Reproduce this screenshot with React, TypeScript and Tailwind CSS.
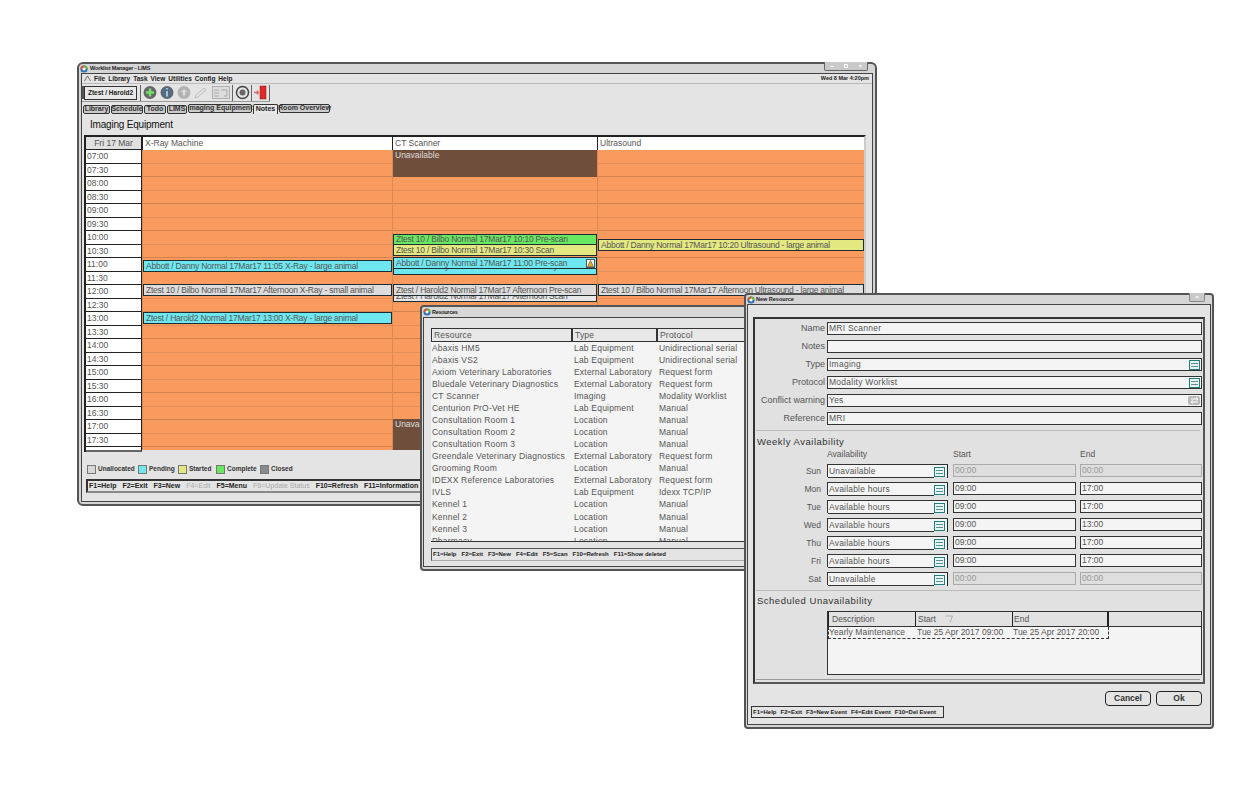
import type { ReactNode } from "react"

const times = ["07:00","07:30","08:00","08:30","09:00","09:30","10:00","10:30","11:00","11:30","12:00","12:30","13:00","13:30","14:00","14:30","15:00","15:30","16:00","16:30","17:00","17:30"]

const resources = [
  ["Abaxis HM5", "Lab Equipment", "Unidirectional serial"],
  ["Abaxis VS2", "Lab Equipment", "Unidirectional serial"],
  ["Axiom Veterinary Laboratories", "External Laboratory", "Request form"],
  ["Bluedale Veterinary Diagnostics", "External Laboratory", "Request form"],
  ["CT Scanner", "Imaging", "Modality Worklist"],
  ["Centurion PrO-Vet HE", "Lab Equipment", "Manual"],
  ["Consultation Room 1", "Location", "Manual"],
  ["Consultation Room 2", "Location", "Manual"],
  ["Consultation Room 3", "Location", "Manual"],
  ["Greendale Veterinary Diagnostics", "External Laboratory", "Request form"],
  ["Grooming Room", "Location", "Manual"],
  ["IDEXX Reference Laboratories", "External Laboratory", "Request form"],
  ["IVLS", "Lab Equipment", "Idexx TCP/IP"],
  ["Kennel 1", "Location", "Manual"],
  ["Kennel 2", "Location", "Manual"],
  ["Kennel 3", "Location", "Manual"],
  ["Pharmacy", "Location", "Manual"],
]

const week = [
  ["Sun", "Unavailable", "00:00", "00:00"],
  ["Mon", "Available hours", "09:00", "17:00"],
  ["Tue", "Available hours", "09:00", "17:00"],
  ["Wed", "Available hours", "09:00", "13:00"],
  ["Thu", "Available hours", "09:00", "17:00"],
  ["Fri", "Available hours", "09:00", "17:00"],
  ["Sat", "Unavailable", "00:00", "00:00"],
]

function AppLogo() {
  return (
    <svg width="8" height="8" viewBox="0 0 8 8" className="shrink-0">
      <circle cx="4" cy="4" r="3.6" fill="#2f6fb5" />
      <path d="M4 .5A3.5 3.5 0 0 1 7.5 4H4z" fill="#6cb33f" />
      <path d="M.5 4A3.5 3.5 0 0 1 4 .5V4z" fill="#d9503f" />
      <circle cx="4" cy="4" r="1.6" fill="#fff" />
    </svg>
  )
}

function ListIcon() {
  return (
    <span className="flex h-[10px] w-[11px] flex-col justify-center gap-[2px] border border-[#1f7f80] bg-[#e8f4f4] px-[1px]">
      <span className="h-px bg-[#5b8f90]" />
      <span className="h-px bg-[#5b8f90]" />
    </span>
  )
}

function ToggleIcon() {
  return (
    <span className="flex h-[9px] w-[12px] items-center justify-center rounded-[2px] bg-[#b9b9b9]">
      <svg width="9" height="7" viewBox="0 0 9 7" fill="none" stroke="#fff" strokeWidth="1">
        <path d="M1 2h7M6 .5 8 2 6 3.5M8 5H1M3 3.5 1 5l2 1.5" />
      </svg>
    </span>
  )
}

function Event(props: { top: number; h: number; color: string; label: string; z?: number; children?: ReactNode }) {
  return (
    <div
      className="absolute left-0 right-0 flex items-center justify-between overflow-hidden whitespace-nowrap border-[1px] border-[#1d2b33] pl-[2px] text-[8.5px] leading-none text-[#555] tracking-[-0.23px]"
      style={{ top: props.top, height: props.h, background: props.color, zIndex: props.z ?? 1 }}
    >
      <span>{props.label}</span>
      {props.children}
    </div>
  )
}

function Column(props: { width: number; title: string; children?: ReactNode }) {
  return (
    <div className="flex shrink-0 flex-col" style={{ width: props.width }}>
      <div className="flex h-[13px] items-center border-l border-[#222] bg-white pl-[2px] text-[8.5px] text-[#555]">{props.title}</div>
      <div className="relative h-[300px] overflow-hidden border-l border-[#d98a55] bg-[#f99b5e]">
        {times.map((t, i) => (
          <div key={t} className={"h-[13.5px] border-b " + (i % 2 ? "border-[#d4824c]" : "border-[#e58f58]")} />
        ))}
        {props.children}
      </div>
    </div>
  )
}

function Tab(props: { width: number; label: string; active?: boolean; raised?: boolean }) {
  if (props.active) {
    return <div className="flex h-[10px] items-center justify-center whitespace-nowrap rounded-t-[2px] border border-b-0 border-[#333] bg-[#e8e8e8] text-[7px] font-bold text-[#222]" style={{ width: props.width }}>{props.label}</div>
  }
  return (
    <div
      className={"flex h-[9px] items-center justify-center whitespace-nowrap rounded-[2px] border border-[#333] bg-[#cbcbcb] text-[7px] font-bold text-[#333] " + (props.raised ? "mb-[1.5px]" : "")}
      style={{ width: props.width }}
    >
      {props.label}
    </div>
  )
}

function Swatch(props: { color: string; label: string; width: number }) {
  return (
    <div className="flex items-center gap-[2px]" style={{ width: props.width }}>
      <span className="h-[9px] w-[9px] border border-[#777]" style={{ background: props.color }} />
      <span className="whitespace-nowrap text-[6.5px] font-bold text-[#333]">{props.label}</span>
    </div>
  )
}

function Field(props: { label: string; value: string; icon?: ReactNode }) {
  return (
    <div className="flex h-[18px] items-start">
      <span className="w-[71px] whitespace-nowrap pr-[2px] pt-[1px] text-right text-[9px] leading-[11px] text-[#555]">{props.label}</span>
      <div className="relative flex h-[13px] w-[375px] items-center border border-[#333] bg-[#f4f4f4] pl-[1px] text-[8.5px] tracking-[0.25px] text-[#555]">
        {props.value}
        {props.icon && <span className="absolute right-[1px] top-[1px]">{props.icon}</span>}
      </div>
    </div>
  )
}

function TimeBox(props: { value: string; off: boolean; width: number }) {
  return (
    <div
      className={"flex h-[13px] items-center border pl-[1px] text-[8.5px] " + (props.off ? "border-[#aaa] bg-[#dedede] text-[#999]" : "border-[#333] bg-[#f4f4f4] text-[#555]")}
      style={{ width: props.width }}
    >
      {props.value}
    </div>
  )
}

function MainWindow() {
  return (
    <div className="absolute left-[77px] top-[62px] flex h-[444px] w-[800px] flex-col rounded-[6px] border-2 border-[#555] bg-[#d5d5d5] font-['Liberation_Sans',sans-serif]">
      <div className="relative flex h-[9px] shrink-0 items-center gap-[2px] pl-[1px]">
        <AppLogo />
        <span className="text-[5.5px] font-bold tracking-[-0.15px] text-[#222]">Worklist Manager - LIMS</span>
        <div className="absolute right-[7px] top-[-2px] flex h-[9px] w-[44px] items-center justify-around rounded-b-[2px] border border-t-0 border-[#666] bg-[#c9c9c9] text-white">
          <span className="h-px w-[4px] bg-white" />
          <span className="h-[4px] w-[4px] border border-white" />
          <span className="text-[6px] font-bold leading-none">×</span>
        </div>
      </div>
      <div className="mx-[2px] mb-[2px] flex min-h-0 flex-1 flex-col border border-[#444] bg-[#e4e4e4]">
        <div className="flex h-[10px] shrink-0 items-center justify-between border-b border-[#bbb] pl-[2px] pr-[3px] text-[6.5px] font-bold text-[#222]">
          <div className="flex items-center gap-[3px]">
            <svg width="7" height="7" viewBox="0 0 8 7" fill="none" stroke="#666" strokeWidth="1"><path d="M.5 6.500 4 .5l3.500 6" /></svg>
            <span>File</span><span>Library</span><span>Task</span><span>View</span><span>Utilities</span><span>Config</span><span>Help</span>
          </div>
          <span className="text-[5.5px]">Wed 8 Mar 4:20pm</span>
        </div>
        <div className="flex h-[18px] w-[188px] shrink-0 items-center border-b border-[#999]">
          <span className="h-[13px] w-[2px] border-x border-[#555]" />
          <div className="flex h-[14px] w-[53px] items-center justify-center border border-[#333] bg-[#e8e8e8] text-[6.5px] font-bold text-[#222]">Ztest / Harold2</div>
          <span className="ml-[3px] h-[16px] w-px bg-[#666]" />
          <svg width="91" height="15" viewBox="0 0 91 15" className="shrink-0">
            <circle cx="9" cy="7.500" r="6.500" fill="#666" />
            <path d="M9 3.500v8M5 7.500h8" stroke="#6fe06a" strokeWidth="2.500" />
            <circle cx="26" cy="7.500" r="6.500" fill="#5b6a78" />
            <path d="M26 3v1.500M26 6v5.500" stroke="#8fc8f0" strokeWidth="2" />
            <circle cx="43" cy="7.500" r="6.500" fill="#b4b4b4" />
            <path d="M43 4l-3 3h2v3.500h2V7h2z" fill="#dedede" />
            <path d="M54 13l1-3 8-7 2 2-8 7z" fill="none" stroke="#bcbcbc" />
            <rect x="71.500" y="1.500" width="17" height="12" fill="#dcdcdc" stroke="#b0b0b0" />
            <path d="M73 5h5M73 8h5M73 11h5M80 5h6v6h-3" fill="none" stroke="#aaa" />
          </svg>
          <span className="h-[16px] w-px bg-[#666]" />
          <svg width="18" height="15" viewBox="0 0 18 15" className="shrink-0">
            <circle cx="9.500" cy="7.500" r="6" fill="none" stroke="#444" strokeWidth="1.500" />
            <circle cx="9.500" cy="7.500" r="3" fill="#666" />
          </svg>
          <span className="h-[16px] w-px bg-[#666]" />
          <svg width="17" height="15" viewBox="0 0 17 15" className="shrink-0">
            <rect x="8" y="1" width="6" height="13" fill="#e02a2a" stroke="#8a1a1a" strokeWidth=".5" />
            <path d="M2 7.500h5M5.500 5.500v4" stroke="#d06a5a" strokeWidth="1.500" />
          </svg>
          <span className="h-[16px] w-px bg-[#666]" />
        </div>
        <div className="flex h-[12px] shrink-0 items-end pl-[1px]">
          <div className="flex items-end gap-[1px]">
            <Tab width={27} label="Library" />
            <Tab width={32} label="Schedule" />
            <Tab width={22} label="Todo" />
            <Tab width={20} label="LIMS" />
            <Tab width={64} label="Imaging Equipment" raised />
            <Tab width={25} label="Notes" active />
            <Tab width={51} label="Room Overview" raised />
          </div>
        </div>
        <div className="flex h-[21px] shrink-0 items-center pl-[8px] text-[10px] tracking-[-0.2px] text-[#111]">Imaging Equipment</div>
        <div className="ml-[2px] flex h-[317px] w-[782px] shrink-0 items-start border-2 border-b-0 border-[#222] border-r-[#ccc]">
          <div className="flex w-[56px] shrink-0 flex-col border-b-2 border-r border-[#222] border-b-[#666]">
            <div className="flex h-[13px] items-center justify-center border-b border-[#222] bg-[#e0e0e0] text-[8.5px] text-[#555]">Fri 17 Mar</div>
            <div className="h-[300px] overflow-hidden bg-white">
              {times.map((t) => (
                <div key={t} className="flex h-[13.5px] items-center border-b border-[#222] pl-[1px] pt-[1px] text-[8.5px] text-[#555]">{t}</div>
              ))}
            </div>
          </div>
          <Column width={250} title="X-Ray Machine">
            <Event top={110} h={12} color="#6ee8f0" label="Abbott / Danny Normal 17Mar17 11:05 X-Ray - large animal" />
            <Event top={134} h={12} color="#dddddd" label="Ztest 10 / Bilbo Normal 17Mar17 Afternoon X-Ray - small animal" />
            <Event top={162} h={12} color="#6ee8f0" label="Ztest / Harold2 Normal 17Mar17 13:00 X-Ray - large animal" />
          </Column>
          <Column width={205} title="CT Scanner">
            <div className="absolute left-0 right-0 top-0 h-[27px] bg-[#6f4f3c] pl-[2px] text-[8.5px] leading-[10px] text-[#ddd]">Unavailable</div>
            <Event top={84} h={11} color="#68e860" label="Ztest 10 / Bilbo Normal 17Mar17 10:10 Pre-scan" z={2} />
            <Event top={94} h={12} color="#e4e880" label="Ztest 10 / Bilbo Normal 17Mar17 10:30 Scan" z={3} />
            <Event top={108} h={17} color="#6ee8f0" label="Abbott / Danny Normal 17Mar17 11:15 X-Ray" z={2} />
            <Event top={107} h={12} color="#6ee8f0" label="Abbott / Danny Normal 17Mar17 11:00 Pre-scan" z={4}>
              <span className="mr-[1px] flex h-[9px] w-[9px] items-center justify-center border border-[#555] bg-white">
                <svg width="7" height="7" viewBox="0 0 7 7"><path d="M3.500.5 6.500 6.500H.5z" fill="#e0b020" stroke="#333" strokeWidth=".5" /></svg>
              </span>
            </Event>
            <Event top={140} h={12} color="#e6e6e6" label="Ztest / Harold2 Normal 17Mar17 Afternoon Scan" z={2} />
            <Event top={134} h={12} color="#dddddd" label="Ztest / Harold2 Normal 17Mar17 Afternoon Pre-scan" z={3} />
            <div className="absolute bottom-0 left-0 right-0 top-[269px] bg-[#6f4f3c] pl-[2px] text-[8.5px] leading-[10px] text-[#ddd]">Unavailable</div>
          </Column>
          <Column width={267} title="Ultrasound">
            <Event top={89} h={12} color="#e4e880" label="Abbott / Danny Normal 17Mar17 10:20 Ultrasound - large animal" />
            <Event top={134} h={12} color="#dddddd" label="Ztest 10 / Bilbo Normal 17Mar17 Afternoon Ultrasound - large animal" />
          </Column>
        </div>
        <div className="flex h-[27px] shrink-0 items-center pl-[5px] pt-[7px]">
          <Swatch color="#d8d8d8" label="Unallocated" width={51} />
          <Swatch color="#6ee8f0" label="Pending" width={40} />
          <Swatch color="#e4e880" label="Started" width={38} />
          <Swatch color="#68e860" label="Complete" width={44} />
          <Swatch color="#8a8a8a" label="Closed" width={40} />
        </div>
        <div className="ml-[4px] flex h-[14px] w-[776px] shrink-0 items-center gap-[6px] border-2 border-[#888] border-l-[#333] border-t-[#333] pl-[1px] text-[7px] font-bold text-[#222]">
          <span>F1=Help</span><span>F2=Exit</span><span>F3=New</span><span className="font-normal text-[#aaa]">F4=Edit</span><span>F5=Menu</span><span className="font-normal text-[#aaa]">F6=Update Status</span><span>F10=Refresh</span><span>F11=Information</span>
        </div>
      </div>
    </div>
  )
}

function ResourcesWindow() {
  return (
    <div className="absolute left-[420px] top-[305px] z-10 flex h-[266px] w-[340px] flex-col rounded-[4px] border-2 border-[#555] bg-[#d8d8d8] font-['Liberation_Sans',sans-serif]">
      <div className="flex h-[10px] shrink-0 items-center gap-[1px] pl-[1px] text-[5.5px] font-bold tracking-[-0.3px] text-[#222]">
        <AppLogo />
        Resources
      </div>
      <div className="mx-[1px] mb-[2px] flex flex-1 flex-col border border-[#444] bg-[#e4e4e4] pl-[7px] pt-[10px]">
        <div className="flex h-[14px] shrink-0 border border-[#333] bg-[#e8e8e8] text-[8.5px] tracking-[0.2px] text-[#555]">
          <span className="w-[141px] border-r-2 border-[#333] pl-[2px] leading-[12px]">Resource</span>
          <span className="w-[85px] border-r-2 border-[#333] pl-[2px] leading-[12px]">Type</span>
          <span className="pl-[2px] leading-[12px]">Protocol</span>
        </div>
        <div className="h-[200px] shrink-0 overflow-hidden border-b border-[#333] bg-[#f4f4f4]">
          {resources.map((r) => (
            <div key={r[0]} className="flex h-[12.07px] items-center whitespace-nowrap text-[8.5px] tracking-[0.2px] text-[#555]">
              <span className="w-[142px] pl-[1px]">{r[0]}</span>
              <span className="w-[85px] pl-[1px]">{r[1]}</span>
              <span className="pl-[1px]">{r[2]}</span>
            </div>
          ))}
        </div>
        <div className="mt-[6px] flex h-[13px] shrink-0 items-center gap-[5px] border border-[#555] border-b-[#aaa] pl-[1px] text-[6px] font-bold text-[#222]">
          <span>F1=Help</span><span>F2=Exit</span><span>F3=New</span><span>F4=Edit</span><span>F5=Scan</span><span>F10=Refresh</span><span>F11=Show deleted</span>
        </div>
      </div>
    </div>
  )
}

function NewResourceWindow() {
  return (
    <div className="absolute left-[744px] top-[293px] z-20 flex h-[436px] w-[470px] flex-col rounded-[4px] border-2 border-[#555] bg-[#d5d5d5] font-['Liberation_Sans',sans-serif]">
      <div className="relative flex h-[9px] shrink-0 items-center gap-[1px] pl-[1px] text-[5.5px] font-bold text-[#222]">
        <AppLogo />
        New Resource
        <span className="absolute right-[7px] top-[-2px] flex h-[9px] w-[16px] items-center justify-center rounded-b-[2px] border border-t-0 border-[#888] bg-[#c9c9c9] text-[6px] font-bold leading-none text-white">×</span>
      </div>
      <div className="mx-[1px] mb-[2px] flex flex-1 flex-col border border-[#444] bg-[#e4e4e4] px-[5px] pt-[12px]">
        <div className="h-[367px] shrink-0 border-2 border-[#333] border-b-[#555] border-r-[#555] bg-[#e1e1e1] pl-[1px] pt-[3px]">
          <Field label="Name" value="MRI Scanner" />
          <Field label="Notes" value="" />
          <Field label="Type" value="Imaging" icon={<ListIcon />} />
          <Field label="Protocol" value="Modality Worklist" icon={<ListIcon />} />
          <Field label="Conflict warning" value="Yes" icon={<ToggleIcon />} />
          <Field label="Reference" value="MRI" />
          <div className="mr-[3px] h-px bg-[#bbb]" />
          <div className="mt-[4px] h-[13px] pl-[1px] text-[9.5px] leading-[13px] tracking-[0.5px] text-[#333]">Weekly Availability</div>
          <div className="flex h-[16px] items-start text-[8.5px] leading-[13px] text-[#555]">
            <span className="ml-[71px] w-[126px]">Availability</span>
            <span className="w-[127px]">Start</span>
            <span>End</span>
          </div>
          {week.map((d) => {
            const off = d[1] === "Unavailable"
            return (
              <div key={d[0]} className="flex h-[18px] items-start">
                <span className="w-[66px] pr-[1px] pt-[1.5px] text-right text-[8.5px] leading-[11px] text-[#555]">{d[0]}</span>
                <div className="relative ml-[5px] flex h-[13px] w-[121px] items-center border-l border-t border-[#333] bg-[#f4f4f4] pl-[1px] text-[8.5px] tracking-[0.2px] text-[#555]">
                  {d[1]}
                  <span className="absolute right-0 top-0 h-[13px] w-px bg-[#222]" />
                  <span className="absolute bottom-[-1px] left-0 h-px w-[106px] bg-[#333]" />
                  <span className="absolute right-[3px] top-[2px]"><ListIcon /></span>
                </div>
                <div className="ml-[5px]"><TimeBox value={d[2]} off={off} width={123} /></div>
                <div className="ml-[4px]"><TimeBox value={d[3]} off={off} width={122} /></div>
              </div>
            )
          })}
          <div className="mr-[3px] h-px bg-[#bbb]" />
          <div className="mt-[3px] h-[17px] pl-[1px] text-[9.5px] leading-[13px] tracking-[0.5px] text-[#333]">Scheduled Unavailability</div>
          <div className="ml-[71px] h-[64px] w-[375px] border border-[#333] bg-[#f4f4f4]">
            <div className="flex h-[15px] border-b border-[#333] bg-[#e2e2e2] text-[8.5px] leading-[14px] text-[#555]">
              <span className="w-[88px] border-x border-[#222] pl-[3px]">Description</span>
              <span className="relative w-[97px] border-r border-[#222] pl-[2px]">
                Start
                <svg width="8" height="8" viewBox="0 0 8 8" className="absolute left-[29px] top-[3px]" fill="none" stroke="#999" strokeWidth=".7"><path d="M.5 1h7L5 7.500" /></svg>
              </span>
              <span className="w-[96px] border-r-2 border-[#222] pl-[1px]">End</span>
            </div>
            <div className="flex h-[12px] w-[281px] items-center whitespace-nowrap border-x border-b border-dashed border-[#333] text-[8.5px] text-[#555]">
              <span className="w-[88px] tracking-[0.1px]">Yearly Maintenance</span>
              <span className="w-[96px]">Tue 25 Apr 2017 09:00</span>
              <span>Tue 25 Apr 2017 20:00</span>
            </div>
          </div>
          <div className="mr-[3px] mt-[4px] h-px bg-[#999]" />
        </div>
        <div className="flex shrink-0 items-start justify-between">
          <div className="-ml-[2px] mt-[22px] flex h-[12px] w-[193px] items-center gap-[4px] whitespace-nowrap border border-[#333] pl-[1px] text-[6px] font-bold text-[#222]">
            <span>F1=Help</span><span>F2=Exit</span><span>F3=New Event</span><span>F4=Edit Event</span><span>F10=Del Event</span>
          </div>
          <div className="mr-[3px] mt-[7px] flex gap-[5px]">
            <div className="flex h-[15px] w-[46px] items-center justify-center rounded-[4px] border border-[#222] text-[8.5px] font-bold text-[#333]">Cancel</div>
            <div className="flex h-[15px] w-[46px] items-center justify-center rounded-[4px] border border-[#222] text-[8.5px] font-bold text-[#333]">Ok</div>
          </div>
        </div>
      </div>
    </div>
  )
}

export default function App() {
  return (
    <div className="relative h-[798px] w-[1257px] overflow-hidden bg-white antialiased">
      <MainWindow />
      <ResourcesWindow />
      <NewResourceWindow />
    </div>
  )
}
